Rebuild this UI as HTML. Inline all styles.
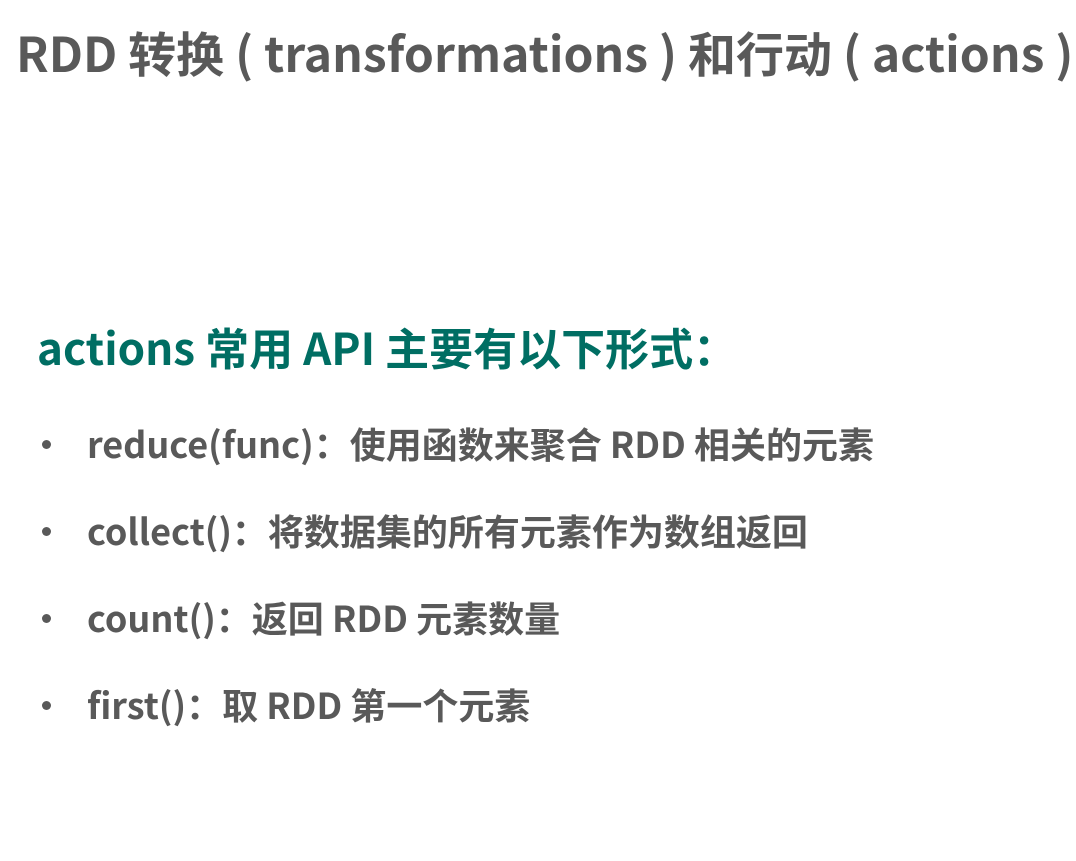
<!DOCTYPE html>
<html><head><meta charset="utf-8"><style>
body{margin:0;width:1076px;height:861px;background:#fff;font-family:"Noto Sans CJK SC","Liberation Sans",sans-serif;font-weight:bold;overflow:hidden;position:relative}
.t{position:absolute;left:16px;top:16px;font-size:48px;color:#595959;white-space:nowrap;line-height:70px}
.h{position:absolute;left:37px;top:314px;font-size:44px;color:#006e63;white-space:nowrap;line-height:64px}
.li{position:absolute;left:87px;font-size:36px;color:#595959;white-space:nowrap;line-height:50px}
.b{position:absolute;left:42px;width:9px;height:9px;border-radius:50%;background:#595959}
</style></head><body>
<div class="t">RDD 转换 ( transformations ) 和行动 ( actions )</div>
<div class="h">actions 常用 API 主要有以下形式：</div>
<div class="b" style="top:440px"></div><div class="li" style="top:418px">reduce(func)：使用函数来聚合 RDD 相关的元素</div>
<div class="b" style="top:527px"></div><div class="li" style="top:505px">collect()：将数据集的所有元素作为数组返回</div>
<div class="b" style="top:614px"></div><div class="li" style="top:592px">count()：返回 RDD 元素数量</div>
<div class="b" style="top:701px"></div><div class="li" style="top:679px">first()：取 RDD 第一个元素</div>
</body></html>
